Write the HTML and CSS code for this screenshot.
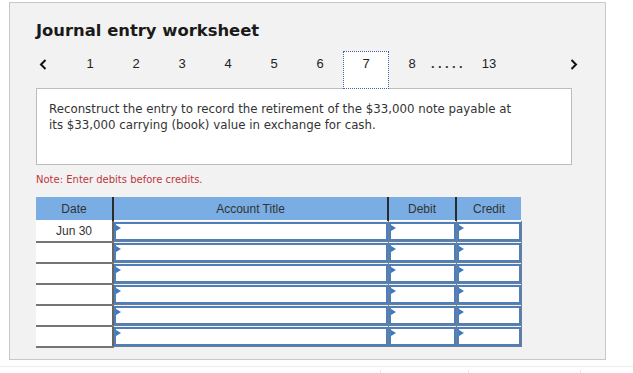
FILE: index.html
```html
<!DOCTYPE html>
<html>
    <head>
        <meta charset="utf-8">
        <title>Journal entry worksheet</title>
        <link rel="stylesheet" href="styles.css">
    </head>
    <body>
        <div class="worksheet">
            <!-- title -->
            <h1 class="worksheet-title">Journal entry worksheet</h1>
            <!-- pager -->
            <div class="pager">
                <span class="pager-arrow">
                    <svg width="8" height="11" viewBox="0 0 8 11"><path d="M6.5 1 L2 5.5 L6.5 10" fill="none" stroke="#111" stroke-width="2"/></svg>
                </span>
                <ul class="pager-list">
                    <li class="pager-item">1</li>
                    <li class="pager-item">2</li>
                    <li class="pager-item">3</li>
                    <li class="pager-item">4</li>
                    <li class="pager-item">5</li>
                    <li class="pager-item">6</li>
                    <li class="pager-item pager-active">7</li>
                    <li class="pager-item">8</li>
                    <li class="pager-dots">.....</li>
                    <li class="pager-item pager-last">13</li>
                </ul>
                <span class="pager-arrow pager-next">
                    <svg width="8" height="11" viewBox="0 0 8 11"><path d="M1.5 1 L6 5.5 L1.5 10" fill="none" stroke="#111" stroke-width="2"/></svg>
                </span>
            </div>
            <!-- question -->
            <div class="question">
                Reconstruct the entry to record the retirement of the $33,000 note payable at<br>
                its $33,000 carrying (book) value in exchange for cash.
            </div>
            <p class="note">Note: Enter debits before credits.</p>
            <!-- journal table -->
            <table class="journal">
                <thead>
                    <tr>
                        <th class="col-date">Date</th>
                        <th class="col-account">Account Title</th>
                        <th class="col-debit">Debit</th>
                        <th class="col-credit">Credit</th>
                    </tr>
                </thead>
                <tbody>
                    <tr>
                        <td class="cell-date">Jun 30</td>
                        <td class="cell-input"><div class="entry"></div></td>
                        <td class="cell-input"><div class="entry"></div></td>
                        <td class="cell-input"><div class="entry"></div></td>
                    </tr>
                    <tr>
                        <td class="cell-date"></td>
                        <td class="cell-input"><div class="entry"></div></td>
                        <td class="cell-input"><div class="entry"></div></td>
                        <td class="cell-input"><div class="entry"></div></td>
                    </tr>
                    <tr>
                        <td class="cell-date"></td>
                        <td class="cell-input"><div class="entry"></div></td>
                        <td class="cell-input"><div class="entry"></div></td>
                        <td class="cell-input"><div class="entry"></div></td>
                    </tr>
                    <tr>
                        <td class="cell-date"></td>
                        <td class="cell-input"><div class="entry"></div></td>
                        <td class="cell-input"><div class="entry"></div></td>
                        <td class="cell-input"><div class="entry"></div></td>
                    </tr>
                    <tr>
                        <td class="cell-date"></td>
                        <td class="cell-input"><div class="entry"></div></td>
                        <td class="cell-input"><div class="entry"></div></td>
                        <td class="cell-input"><div class="entry"></div></td>
                    </tr>
                    <tr>
                        <td class="cell-date"></td>
                        <td class="cell-input"><div class="entry"></div></td>
                        <td class="cell-input"><div class="entry"></div></td>
                        <td class="cell-input"><div class="entry"></div></td>
                    </tr>
                </tbody>
            </table>
        </div>
        <!-- cut off footer -->
        <div class="footer">
            <span class="footer-cell footer-a"></span>
            <span class="footer-cell footer-b"></span>
            <span class="footer-cell footer-c"></span>
            <span class="footer-cell footer-d"></span>
        </div>
    </body>
</html>
```

FILE: styles.css
```css
body {
    margin: 0;
    background: #fff;
    font-family: "Liberation Sans", Arial, sans-serif;
}
.worksheet {
    box-sizing: border-box;
    width: 597px;
    height: 358px;
    margin: 2px 0 0 9px;
    padding: 0 0 0 26px;
    background: #f2f2f2;
    border: 1px solid #c8c8c8;
}
.worksheet-title {
    margin: 0;
    padding-top: 17px;
    font-family: "DejaVu Sans", sans-serif;
    font-weight: bold;
    font-size: 16.4px;
    line-height: 22px;
    color: #1a1a1a;
}
.pager {
    display: flex;
    align-items: flex-start;
    height: 38px;
    margin-top: 9px;
    position: relative;
    z-index: 1;
}
.pager-arrow {
    display: flex;
    align-items: center;
    height: 26px;
    width: 8px;
    margin-left: 3px;
}
.pager-next {
    margin-left: 66px;
}
.pager-list {
    display: flex;
    list-style: none;
    margin: 0 0 0 20px;
    padding: 0;
}
.pager-item {
    width: 46px;
    height: 26px;
    line-height: 26px;
    text-align: center;
    font-size: 13px;
    color: #222;
}
.pager-active {
    height: 38px;
    box-sizing: border-box;
    line-height: 24px;
    background: #fff;
    border: 1px dotted #3a63a8;
}
.pager-dots {
    width: 34px;
    height: 26px;
    line-height: 26px;
    font-size: 13px;
    font-weight: bold;
    letter-spacing: 3.4px;
    color: #333;
    margin-left: -4px;
}
.pager-last {
    width: 30px;
    margin-left: 9px;
}
.question {
    width: 536px;
    height: 77px;
    box-sizing: border-box;
    margin-top: -1px;
    padding: 12px 12px;
    background: #fff;
    border: 1px solid #bdbdbd;
    font-family: "DejaVu Sans", sans-serif;
    font-size: 11.8px;
    line-height: 16px;
    color: #333;
    white-space: nowrap;
}
.note {
    margin: 8px 0 0 0;
    font-family: "DejaVu Sans", sans-serif;
    font-size: 10px;
    line-height: 14px;
    color: #c0363a;
}
.journal {
    margin-top: 10px;
    border-collapse: collapse;
    table-layout: fixed;
    width: 479px;
    font-size: 12px;
}
.journal th {
    height: 23px;
    padding: 0;
    background: #79ade3;
    color: #333;
    font-weight: normal;
    border-left: 2px solid #2b2b2b;
    border-bottom: 1px solid #fff;
}
.journal th.col-date {
    border-left: none;
}
.col-date {
    width: 76px;
}
.col-account {
    width: 273px;
}
.col-debit {
    width: 66px;
}
.col-credit {
    width: 64px;
}
.journal td {
    height: 21px;
    padding: 0;
    box-sizing: border-box;
}
.cell-date {
    background: #fff;
    text-align: center;
    color: #333;
    border-bottom: 2px solid #757575;
    border-right: 2px solid #666;
}
.cell-input {
    border: 1px solid #6d7f95;
}
.entry {
    position: relative;
    height: 19px;
    box-sizing: border-box;
    background: #fff;
    border: 2px solid #4f7fbb;
}
.entry::before {
    content: "";
    position: absolute;
    left: 0;
    top: 1px;
    border-left: 5px solid #3c79c4;
    border-top: 3px solid transparent;
    border-bottom: 3px solid transparent;
}
.footer {
    display: flex;
    margin-top: 6px;
    height: 8px;
    border-top: 1px solid #ececec;
}
.footer-cell {
    margin-top: 3px;
    border-right: 1px solid #e6e6e6;
}
.footer-a {
    width: 380px;
}
.footer-b {
    width: 87px;
}
.footer-c {
    width: 111px;
}
.footer-d {
    flex: 1;
    border-right: none;
}
```
